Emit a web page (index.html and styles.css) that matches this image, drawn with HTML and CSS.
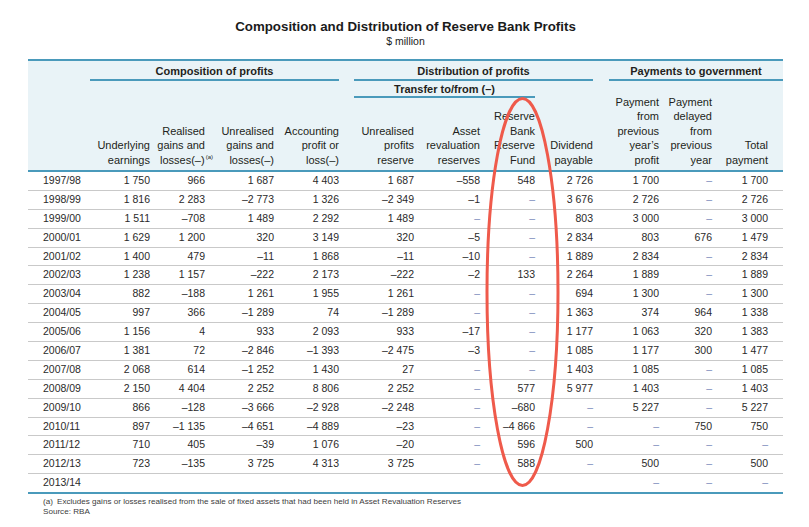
FILE: index.html
```html
<!DOCTYPE html>
<html lang="en">
<head>
<meta charset="utf-8">
<title>Composition and Distribution of Reserve Bank Profits</title>
<link rel="stylesheet" href="styles.css">
</head>
<body>
<div class="page">
  <div class="sheet">
    <h1 class="title">Composition and Distribution of Reserve Bank Profits</h1>
    <div class="unit">$ million</div>

    <div class="thead">
      <div class="grp g-comp">Composition of profits</div>
      <div class="grp g-dist">Distribution of profits</div>
      <div class="grp g-pay">Payments to government</div>
      <div class="sub g-trans">Transfer to/from (–)</div>

      <div class="ch c1">Underlying<br>earnings</div>
      <div class="ch c2">Realised<br>gains and<br>losses(–)<sup class="note">(a)</sup></div>
      <div class="ch c3">Unrealised<br>gains and<br>losses(–)</div>
      <div class="ch c4">Accounting<br>profit or<br>loss(–)</div>
      <div class="ch c5">Unrealised<br>profits<br>reserve</div>
      <div class="ch c6">Asset<br>revaluation<br>reserves</div>
      <div class="ch c7">Reserve<br>Bank<br>Reserve<br>Fund</div>
      <div class="ch c8">Dividend<br>payable</div>
      <div class="ch c9">Payment<br>from<br>previous<br>year’s<br>profit</div>
      <div class="ch c10">Payment<br>delayed<br>from<br>previous<br>year</div>
      <div class="ch c11">Total<br>payment</div>
    </div>

    <div class="tbody">
      <div class="row"><span>1997/98</span><span>1 750</span><span>966</span><span>1 687</span><span>4 403</span><span>1 687</span><span>–558</span><span>548</span><span>2 726</span><span>1 700</span><span class="d">–</span><span>1 700</span></div>
      <div class="row"><span>1998/99</span><span>1 816</span><span>2 283</span><span>–2 773</span><span>1 326</span><span>–2 349</span><span>–1</span><span class="d">–</span><span>3 676</span><span>2 726</span><span class="d">–</span><span>2 726</span></div>
      <div class="row"><span>1999/00</span><span>1 511</span><span>–708</span><span>1 489</span><span>2 292</span><span>1 489</span><span class="d">–</span><span class="d">–</span><span>803</span><span>3 000</span><span class="d">–</span><span>3 000</span></div>
      <div class="row"><span>2000/01</span><span>1 629</span><span>1 200</span><span>320</span><span>3 149</span><span>320</span><span>–5</span><span class="d">–</span><span>2 834</span><span>803</span><span>676</span><span>1 479</span></div>
      <div class="row"><span>2001/02</span><span>1 400</span><span>479</span><span>–11</span><span>1 868</span><span>–11</span><span>–10</span><span class="d">–</span><span>1 889</span><span>2 834</span><span class="d">–</span><span>2 834</span></div>
      <div class="row"><span>2002/03</span><span>1 238</span><span>1 157</span><span>–222</span><span>2 173</span><span>–222</span><span>–2</span><span>133</span><span>2 264</span><span>1 889</span><span class="d">–</span><span>1 889</span></div>
      <div class="row"><span>2003/04</span><span>882</span><span>–188</span><span>1 261</span><span>1 955</span><span>1 261</span><span class="d">–</span><span class="d">–</span><span>694</span><span>1 300</span><span class="d">–</span><span>1 300</span></div>
      <div class="row"><span>2004/05</span><span>997</span><span>366</span><span>–1 289</span><span>74</span><span>–1 289</span><span class="d">–</span><span class="d">–</span><span>1 363</span><span>374</span><span>964</span><span>1 338</span></div>
      <div class="row"><span>2005/06</span><span>1 156</span><span>4</span><span>933</span><span>2 093</span><span>933</span><span>–17</span><span class="d">–</span><span>1 177</span><span>1 063</span><span>320</span><span>1 383</span></div>
      <div class="row"><span>2006/07</span><span>1 381</span><span>72</span><span>–2 846</span><span>–1 393</span><span>–2 475</span><span>–3</span><span class="d">–</span><span>1 085</span><span>1 177</span><span>300</span><span>1 477</span></div>
      <div class="row"><span>2007/08</span><span>2 068</span><span>614</span><span>–1 252</span><span>1 430</span><span>27</span><span class="d">–</span><span class="d">–</span><span>1 403</span><span>1 085</span><span class="d">–</span><span>1 085</span></div>
      <div class="row"><span>2008/09</span><span>2 150</span><span>4 404</span><span>2 252</span><span>8 806</span><span>2 252</span><span class="d">–</span><span>577</span><span>5 977</span><span>1 403</span><span class="d">–</span><span>1 403</span></div>
      <div class="row"><span>2009/10</span><span>866</span><span>–128</span><span>–3 666</span><span>–2 928</span><span>–2 248</span><span class="d">–</span><span>–680</span><span class="d">–</span><span>5 227</span><span class="d">–</span><span>5 227</span></div>
      <div class="row"><span>2010/11</span><span>897</span><span>–1 135</span><span>–4 651</span><span>–4 889</span><span>–23</span><span class="d">–</span><span>–4 866</span><span class="d">–</span><span class="d">–</span><span>750</span><span>750</span></div>
      <div class="row"><span>2011/12</span><span>710</span><span>405</span><span>–39</span><span>1 076</span><span>–20</span><span class="d">–</span><span>596</span><span>500</span><span class="d">–</span><span class="d">–</span><span class="d">–</span></div>
      <div class="row"><span>2012/13</span><span>723</span><span>–135</span><span>3 725</span><span>4 313</span><span>3 725</span><span class="d">–</span><span>588</span><span class="d">–</span><span>500</span><span class="d">–</span><span>500</span></div>
      <div class="row last"><span>2013/14</span><span></span><span></span><span></span><span></span><span></span><span></span><span></span><span></span><span class="d">–</span><span class="d">–</span><span class="d">–</span></div>
    </div>

    <div class="notes">
      <p><span class="nl">(a)</span>Excludes gains or losses realised from the sale of fixed assets that had been held in Asset Revaluation Reserves</p>
      <p>Source: RBA</p>
    </div>
  </div>

  <svg class="oval" width="809" height="527" viewBox="0 0 809 527" aria-hidden="true">
    <ellipse cx="522.5" cy="292" rx="35.5" ry="193.5" fill="none" stroke="#ef5a4b" stroke-width="3"/>
  </svg>
</div>
</body>
</html>
```

FILE: styles.css
```css
* { box-sizing: border-box; }

html, body {
  margin: 0;
  padding: 0;
  background: #ffffff;
}

body {
  font-family: "Liberation Sans", Arial, sans-serif;
  color: #231f20;
}

.page {
  position: relative;
  width: 809px;
  height: 527px;
  overflow: hidden;
}

.sheet {
  width: 755px;
  margin-left: 28px;
  padding-top: 19px;
}

.title {
  margin: 0;
  font-size: 13.3px;
  line-height: 16px;
  font-weight: bold;
  text-align: center;
  color: #1b1b1b;
}

.unit {
  font-size: 10.5px;
  line-height: 12px;
  text-align: center;
  color: #1b1b1b;
  margin-bottom: 12px;
}

/* ---------- header ---------- */
.thead {
  display: grid;
  grid-template-columns: 62px 60px 55px 69px 65px 75px 66px 55px 58px 66px 53px 71px;
  grid-template-rows: 20px 17px 72px;
  background: #e9f3f7;
  border-top: 2px solid #4a9abb;
  border-bottom: 2px solid #4a9abb;
  font-size: 11px;
  line-height: 14.5px;
}

.grp {
  grid-row: 1;
  font-weight: bold;
  text-align: center;
  border-bottom: 2px solid #4a9abb;
  padding-top: 3px;
  line-height: 15px;
}

.g-comp { grid-column: 2 / 6; }
.g-dist { grid-column: 6 / 10; margin-left: 15px; }
.g-pay  { grid-column: 10 / 13; margin-left: 16px; }

.sub {
  grid-row: 2;
  grid-column: 6 / 9;
  margin-left: 15px;
  font-weight: bold;
  text-align: center;
  border-bottom: 2px solid #4a9abb;
  line-height: 15px;
  padding-top: 1px;
}

.ch {
  grid-row: 2 / 4;
  align-self: end;
  text-align: right;
  padding-bottom: 3px;
  white-space: nowrap;
}

.c1 { grid-column: 2; }
.c2 { grid-column: 3; }
.c3 { grid-column: 4; }
.c4 { grid-column: 5; }
.c5 { grid-column: 6; grid-row: 3; }
.c6 { grid-column: 7; grid-row: 3; }
.c7 { grid-column: 8; grid-row: 3; }
.c8 { grid-column: 9; }
.c9 { grid-column: 10; }
.c10 { grid-column: 11; }
.c11 { grid-column: 12; padding-right: 15px; }

.note {
  font-size: 6px;
  line-height: 0;
  vertical-align: 5px;
  margin-right: -8px;
  margin-left: 1px;
}

/* ---------- body ---------- */
.row {
  display: grid;
  grid-template-columns: 62px 60px 55px 69px 65px 75px 66px 55px 58px 66px 53px 71px;
  height: 18.9px;
  border-bottom: 1px solid #c9c9c9;
  font-size: 10.5px;
  line-height: 17.9px;
  color: #2a2a2a;
}

.row span {
  text-align: right;
  white-space: nowrap;
}

.row span:first-child {
  text-align: left;
  padding-left: 15px;
}

.row span:last-child {
  padding-right: 15px;
}

.row .d {
  color: #7d8cbc;
}

.row.last {
  border-bottom: 2px solid #4a9abb;
  height: 19.9px;
}

/* ---------- notes ---------- */
.notes {
  padding-left: 15px;
  padding-top: 3px;
  font-size: 8.1px;
  line-height: 10px;
  color: #3d3d3d;
}

.notes p {
  margin: 0;
}

.nl {
  display: inline-block;
  width: 14px;
}

/* ---------- annotation overlay ---------- */
.oval {
  position: absolute;
  left: 0;
  top: 0;
  pointer-events: none;
}
```
